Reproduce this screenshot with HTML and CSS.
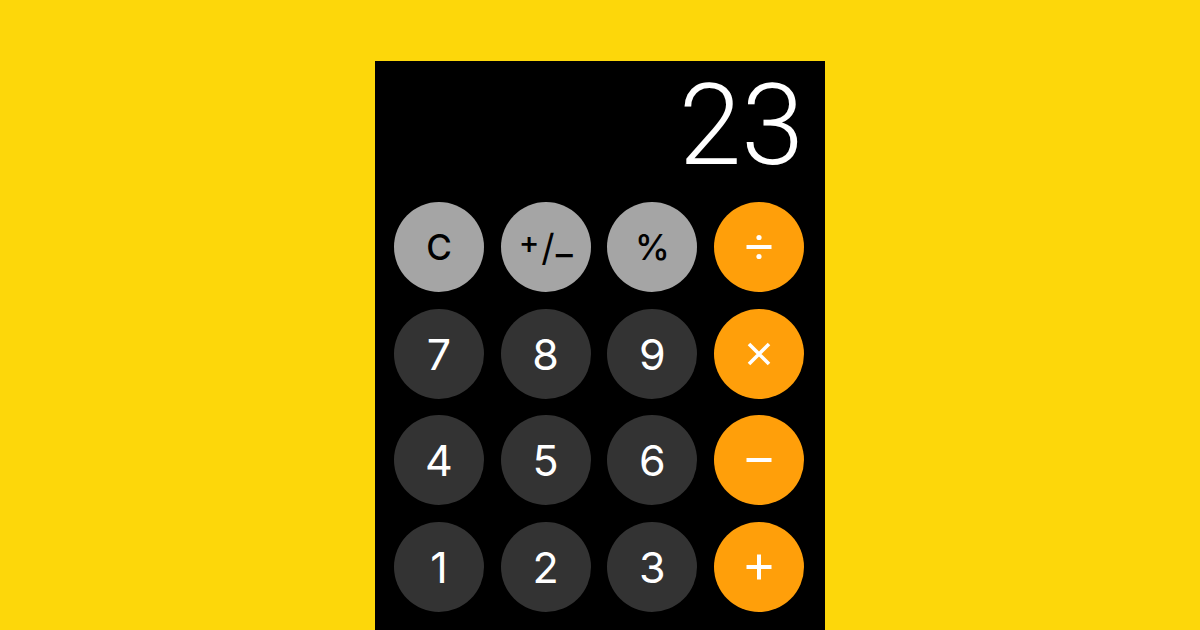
FILE: index.html
```html
<!DOCTYPE html>
<html>
<head>
<meta charset="utf-8">
<link rel="stylesheet" href="styles.css">
</head>
<body>
<div class="calc">
  <div class="display">23</div>
  <div class="keys">
    <div class="key fn"><span class="lbl-c">C</span></div>
    <div class="key fn"><span class="pm"><span class="pm-plus">+</span><span class="pm-slash">/</span><span class="pm-minus">–</span></span></div>
    <div class="key fn"><span class="lbl-c">%</span></div>
    <div class="key op"><svg width="26" height="26" viewBox="0 0 26 26"><rect x="0.5" y="11" width="25" height="4" fill="#fff"/><circle cx="13" cy="3.5" r="2.6" fill="#fff"/><circle cx="13" cy="22.5" r="2.6" fill="#fff"/></svg></div>

    <div class="key num">7</div>
    <div class="key num">8</div>
    <div class="key num">9</div>
    <div class="key op"><svg width="26" height="26" viewBox="0 0 26 26"><path d="M3 3 L23 23 M23 3 L3 23" stroke="#fff" stroke-width="3.6" stroke-linecap="butt"/></svg></div>

    <div class="key num">4</div>
    <div class="key num">5</div>
    <div class="key num">6</div>
    <div class="key op"><svg width="26" height="26" viewBox="0 0 26 26"><rect x="0.5" y="11" width="25" height="4" fill="#fff"/></svg></div>

    <div class="key num">1</div>
    <div class="key num">2</div>
    <div class="key num">3</div>
    <div class="key op"><svg width="26" height="26" viewBox="0 0 26 26"><rect x="0.5" y="11" width="25" height="4" fill="#fff"/><rect x="11" y="0.5" width="4" height="25" fill="#fff"/></svg></div>
  </div>
</div>
</body>
</html>
```
FILE: styles.css
```css
html, body {
  margin: 0;
  padding: 0;
}
body {
  width: 1200px;
  height: 630px;
  overflow: hidden;
  background: #fdd70a;
  display: flex;
  justify-content: center;
  font-family: Inter, "Liberation Sans", sans-serif;
}
.calc {
  margin-top: 61px;
  width: 450px;
  height: 600px;
  background: #000;
  box-sizing: border-box;
  padding: 0 21px 0 19px;
}
.display {
  height: 124px;
  color: #fff;
  font-family: Roboto, "Liberation Sans", sans-serif;
  font-weight: 300;
  font-size: 113px;
  line-height: 130px;
  text-align: right;
  padding-right: 0;
}
.keys {
  margin-top: 17px;
  display: grid;
  grid-template-columns: repeat(4, 90px);
  grid-auto-rows: 90px;
  column-gap: 16.67px;
  row-gap: 16.7px;
}
.key {
  width: 90px;
  height: 90px;
  border-radius: 50%;
  display: flex;
  align-items: center;
  justify-content: center;
}
.fn {
  background: #a5a5a5;
  color: #000;
}
.num {
  background: #333333;
  color: #fff;
  font-size: 43px;
  font-weight: 400;
}
.op {
  background: #ff9f0a;
  color: #fff;
}
.lbl-c {
  font-size: 35px;
  font-weight: 500;
  line-height: 1;
}
.pm {
  display: flex;
  align-items: center;
  height: 40px;
  font-weight: 500;
}
.pm-plus {
  font-size: 31px;
  transform: translateY(-6px);
}
.pm-slash {
  font-size: 37px;
  font-weight: 400;
  margin: 0 1px 0 2px;
}
.pm-minus {
  font-size: 34px;
  transform: translateY(6px);
}
```
